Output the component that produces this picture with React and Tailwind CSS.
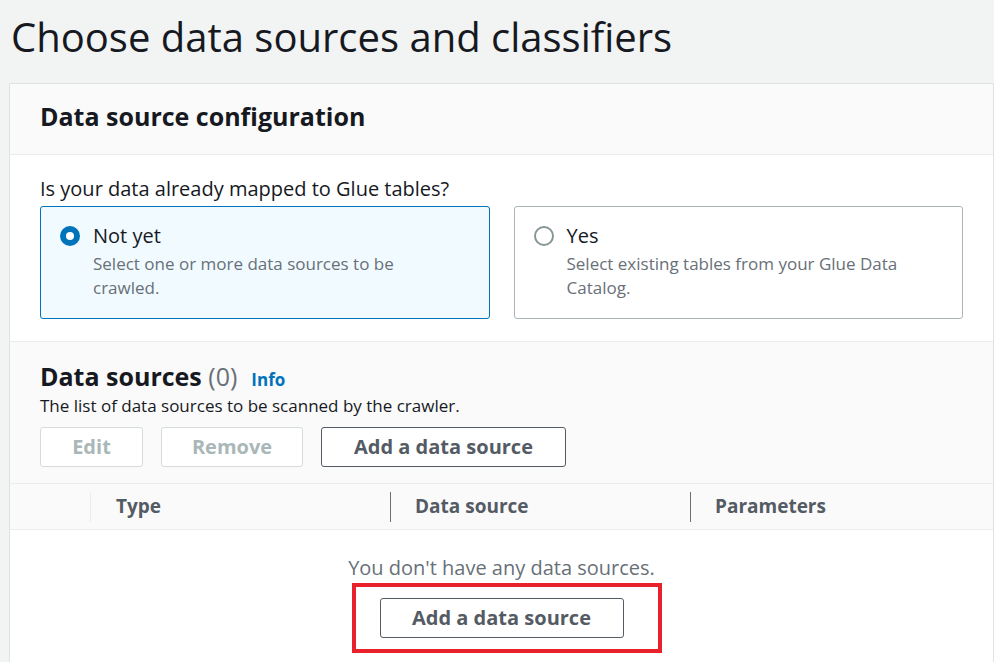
const font = { fontFamily: '"Open Sans", "Noto Sans", sans-serif' };

function Radio({ checked }) {
  if (checked) {
    return (
      <span className="mt-[4px] flex h-[20px] w-[20px] shrink-0 items-center justify-center rounded-full bg-[#0073bb]">
        <span className="h-[8px] w-[8px] rounded-full bg-white" />
      </span>
    );
  }
  return <span className="mt-[4px] h-[20px] w-[20px] shrink-0 rounded-full border-2 border-[#879596] bg-white" />;
}

function Choice({ checked, title, desc }) {
  const box = checked
    ? "border-[#0073bb] bg-[#f1faff]"
    : "border-[#aab7b8] bg-white";
  return (
    <div className={"flex h-[113px] flex-1 gap-[13px] rounded-[3px] border px-[19px] pt-[15px] " + box}>
      <Radio checked={checked} />
      <div>
        <p className="text-[20px] leading-[28px] text-[#16191f]">{title}</p>
        <p className="mt-[2px] text-[17px] leading-[24px] text-[#687078]">{desc}</p>
      </div>
    </div>
  );
}

function Button({ children, disabled, className = "" }) {
  const look = disabled
    ? "border-[#d5dbdb] text-[#aab7b8]"
    : "border-[#545b64] text-[#545b64]";
  return (
    <button className={"flex h-[40px] items-center justify-center rounded-[3px] border bg-white text-[20px] font-bold " + look + " " + className}>
      {children}
    </button>
  );
}

export default function App() {
  return (
    <div style={font} className="h-[662px] overflow-hidden bg-[#f2f3f3]">
      <h1 className="pl-[11px] pt-[12px] text-[40px] leading-[50px] text-[#16191f]">
        Choose data sources and classifiers
      </h1>

      <div className="ml-[9px] mt-[21px] w-[985px] border border-[#dfe3e3] bg-white">
        <div className="flex h-[71px] items-center border-b border-[#eaeded] bg-[#fafafa] px-[30px] pb-[4px]">
          <h2 className="text-[25px] font-bold text-[#16191f]">Data source configuration</h2>
        </div>

        <div className="px-[30px] pb-[22px] pt-[18px]">
          <p className="text-[20px] leading-[32px] text-[#16191f]">Is your data already mapped to Glue tables?</p>
          <div className="mt-[1px] flex gap-[24px]">
            <Choice checked title="Not yet" desc={<>Select one or more data sources to be<br />crawled.</>} />
            <Choice title="Yes" desc={<>Select existing tables from your Glue Data<br />Catalog.</>} />
          </div>
        </div>

        <div className="border-t border-[#eaeded] bg-[#fafafa]">
          <div className="px-[30px] pb-[16px] pt-[17px]">
            <div className="flex items-baseline gap-[14px]">
              <h3 className="text-[25px] font-bold leading-[34px] text-[#16191f]">
                Data sources <span className="font-normal text-[#687078]">(0)</span>
              </h3>
              <a className="text-[17px] font-bold text-[#0073bb]">Info</a>
            </div>
            <p className="text-[17px] leading-[26px] text-[#16191f]">The list of data sources to be scanned by the crawler.</p>
            <div className="mt-[8px] flex gap-[18px]">
              <Button disabled className="w-[103px]">Edit</Button>
              <Button disabled className="w-[142px]">Remove</Button>
              <Button className="w-[245px]">Add a data source</Button>
            </div>
          </div>

          <div className="flex h-[47px] items-center border-y border-[#eaeded] text-[19px] font-bold text-[#545b64]">
            <div className="w-[80px]" />
            <div className="flex h-[30px] w-[300px] items-center border-l border-[#eaeded] pl-[25px]">Type</div>
            <div className="flex h-[30px] w-[300px] items-center border-l border-[#687078] pl-[24px]">Data source</div>
            <div className="flex h-[30px] flex-1 items-center border-l border-[#687078] pl-[24px]">Parameters</div>
          </div>
        </div>

        <div className="flex flex-col items-center bg-white pb-[30px] pt-[23px]">
          <p className="text-[20px] leading-[30px] text-[#687078]">You don't have any data sources.</p>
          <div className="ml-[10px] border-4 border-[#e8212b] pb-[11px] pl-[24px] pr-[34px] pt-[11px]">
            <Button className="w-[244px]">Add a data source</Button>
          </div>
        </div>
      </div>
    </div>
  );
}
